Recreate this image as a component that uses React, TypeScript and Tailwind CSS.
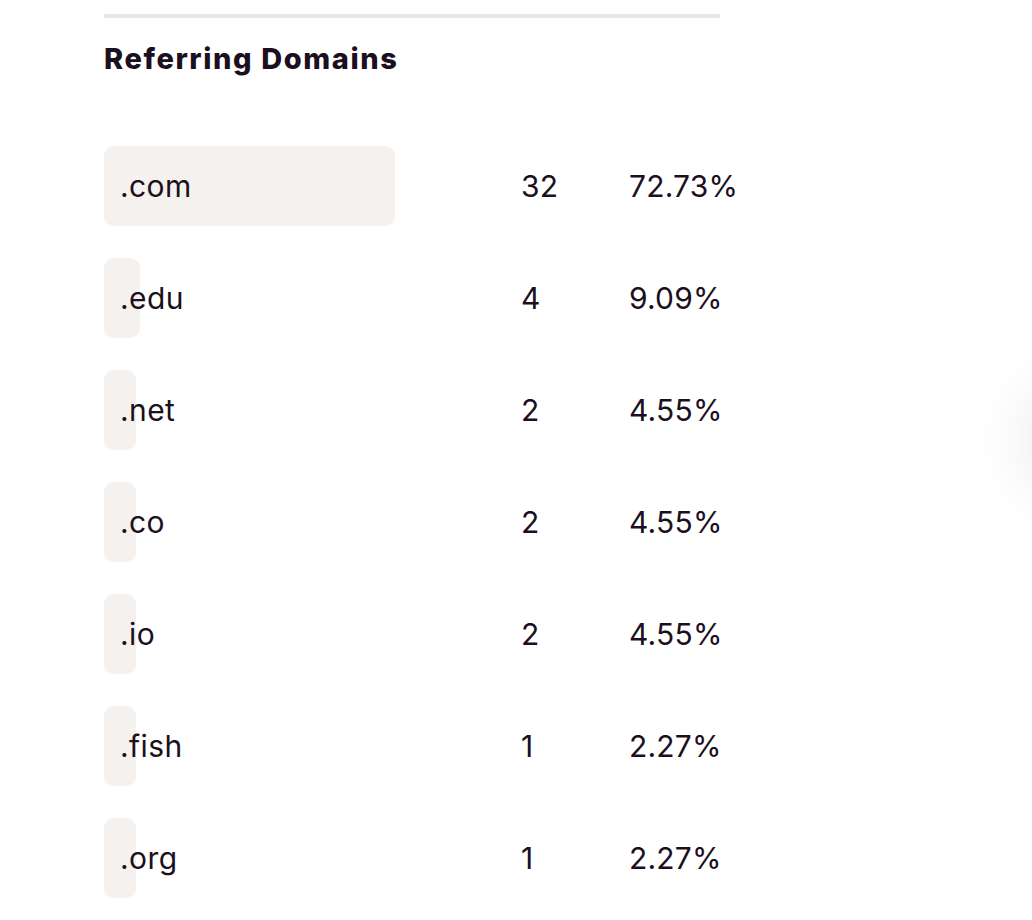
const domains = [
  { tld: ".com", count: 32, pct: 72.73 },
  { tld: ".edu", count: 4, pct: 9.09 },
  { tld: ".net", count: 2, pct: 4.55 },
  { tld: ".co", count: 2, pct: 4.55 },
  { tld: ".io", count: 2, pct: 4.55 },
  { tld: ".fish", count: 1, pct: 2.27 },
  { tld: ".org", count: 1, pct: 2.27 },
];

export default function App() {
  return (
    <div
      className="relative min-h-[920px] w-full overflow-hidden bg-white text-[#1b0f20]"
      style={{ fontFamily: "Inter, 'Open Sans', sans-serif" }}
    >
      <div className="ml-[104px] w-[616px] pt-[14px]">
        <div className="h-[4px] w-full bg-[#e6e6e6]" />
        <h2 className="mt-[23px] text-[29px] font-extrabold leading-[36px] tracking-[1.6px]">
          Referring Domains
        </h2>
        <div className="mt-[69px] flex flex-col gap-[32px]">
          {domains.map((d) => (
            <div key={d.tld} className="grid grid-cols-[417px_108px_1fr] items-center">
              <div className="relative h-[80px]">
                <div
                  className="absolute inset-y-0 left-0 rounded-[10px] bg-[#f5f1ee]"
                  style={{ width: Math.max(32, (d.pct / 100) * 400) }}
                />
                <span className="relative flex h-full items-center pl-[16px] text-[30px] tracking-[0.4px]">
                  {d.tld}
                </span>
              </div>
              <span className="text-[30px] tracking-[0.2px]">{d.count}</span>
              <span className="text-[30px] tracking-[0.2px]">{d.pct.toFixed(2)}%</span>
            </div>
          ))}
        </div>
      </div>
      <div className="absolute right-[-90px] top-[400px] h-[80px] w-[80px] rounded-full shadow-[0_0_60px_20px_rgba(0,0,0,0.08)]" />
    </div>
  );
}
